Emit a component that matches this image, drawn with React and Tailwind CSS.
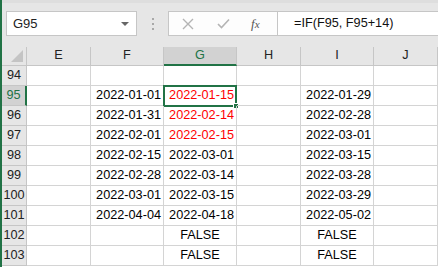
import React from "react";

const GREEN = "#217346";

const columns = [
  { key: "E", w: "w-[64px]" },
  { key: "F", w: "w-[73px]" },
  { key: "G", w: "w-[73px]" },
  { key: "H", w: "w-[64px]" },
  { key: "I", w: "w-[73px]" },
  { key: "J", w: "w-[64px]" },
];

const rows = [
  { n: 94 },
  { n: 95, F: "2022-01-01", G: "2022-01-15", I: "2022-01-29", red: true },
  { n: 96, F: "2022-01-31", G: "2022-02-14", I: "2022-02-28", red: true },
  { n: 97, F: "2022-02-01", G: "2022-02-15", I: "2022-03-01", red: true },
  { n: 98, F: "2022-02-15", G: "2022-03-01", I: "2022-03-15" },
  { n: 99, F: "2022-02-28", G: "2022-03-14", I: "2022-03-28" },
  { n: 100, F: "2022-03-01", G: "2022-03-15", I: "2022-03-29" },
  { n: 101, F: "2022-04-04", G: "2022-04-18", I: "2022-05-02" },
  { n: 102, G: "FALSE", I: "FALSE" },
  { n: 103, G: "FALSE", I: "FALSE" },
];

function FormulaBar() {
  return (
    <div className="h-[47px] bg-[#e6e6e6] border-t-[3px] border-[#dedede] flex items-start pt-[8px]">
      {/* name box */}
      <div className="ml-[4px] w-[131px] h-[25px] bg-white border border-[#c6c6c6] flex items-center pl-[6px] pr-[7px]">
        <span className="text-[13px] text-[#222]">G95</span>
        <span className="ml-auto w-0 h-0 border-l-[4px] border-r-[4px] border-t-[4px] border-l-transparent border-r-transparent border-t-[#666]" />
      </div>
      {/* grip dots */}
      <div className="w-[31px] h-[25px] flex flex-col items-center justify-center gap-[3px]">
        <span className="w-[2px] h-[2px] bg-[#a8a8a8]" />
        <span className="w-[2px] h-[2px] bg-[#a8a8a8]" />
        <span className="w-[2px] h-[2px] bg-[#a8a8a8]" />
      </div>
      {/* cancel / enter / fx */}
      <div className="w-[110px] h-[25px] bg-[#fdfdfd] border border-[#c6c6c6] flex items-center">
        <svg width="12" height="12" viewBox="0 0 12 12" className="ml-[13px]">
          <path d="M1 1 L11 11 M11 1 L1 11" stroke="#b4b4b4" strokeWidth="1.4" fill="none" />
        </svg>
        <svg width="13" height="11" viewBox="0 0 13 11" className="ml-[23px]">
          <path d="M1 6 L4.5 9.5 L12 1.5" stroke="#b4b4b4" strokeWidth="1.6" fill="none" />
        </svg>
        <span className="ml-[21px] text-[13px] italic text-[#555] font-['Liberation_Serif',serif]">
          f<span className="text-[11px]">x</span>
        </span>
      </div>
      {/* formula input */}
      <div className="flex-1 h-[25px] bg-white border border-l-0 border-r-0 border-[#c6c6c6] flex items-center pl-[16px]">
        <span className="text-[12.7px] text-[#111]">=IF(F95, F95+14)</span>
      </div>
    </div>
  );
}

function HeaderRow() {
  return (
    <div className="flex h-[19px]">
      <div className="w-[25px] h-full border-r border-b border-[#c6c6c6] bg-[#e6e6e6] flex items-end justify-end pr-[3px] pb-[3px]">
        <svg width="12" height="12" viewBox="0 0 12 12">
          <path d="M12 0 L12 12 L0 12 Z" fill="#c4c4c4" />
        </svg>
      </div>
      {columns.map((c) =>
        c.key === "G" ? (
          <div
            key={c.key}
            className={`${c.w} h-full bg-[#d2d2d2] border-r border-[#c6c6c6] border-b-2 border-b-[#217346] flex items-center justify-center text-[12.7px] text-[#217346]`}
          >
            {c.key}
          </div>
        ) : (
          <div
            key={c.key}
            className={`${c.w} h-full bg-[#e6e6e6] border-r border-b border-[#c6c6c6] flex items-center justify-center text-[12.7px] text-[#222]`}
          >
            {c.key}
          </div>
        )
      )}
    </div>
  );
}

function Cell({ col, row }) {
  const value = row[col.key];
  const isBool = value === "FALSE";
  const selected = row.n === 95 && col.key === "G";
  const red = row.red && col.key === "G";
  return (
    <div
      className={`${col.w} h-full border-r border-b border-[#d4d4d4] flex items-center pt-px relative ${
        isBool ? "justify-center" : "justify-end pr-[2px]"
      } ${red ? "text-[#ff0000]" : "text-black"}`}
    >
      {value}
      {selected && (
        <div className="absolute -left-px -top-px w-[74px] h-[22px] border-2 border-[#217346]">
          <span className="absolute -right-[4px] -bottom-[4px] w-[6px] h-[6px] bg-[#217346] border border-white" />
        </div>
      )}
    </div>
  );
}

export default function App() {
  return (
    <div
      className="w-[438px] h-[267px] overflow-hidden bg-white border-l-2 font-['Liberation_Sans',Arial,sans-serif]"
      style={{ borderLeftColor: GREEN }}
    >
      <FormulaBar />
      <HeaderRow />
      {rows.map((row) => (
        <div key={row.n} className="flex h-[20px] text-[12.7px]">
          {row.n === 95 ? (
            <div className="w-[25px] h-full bg-[#d2d2d2] border-r-2 border-r-[#217346] border-b border-b-[#c6c6c6] flex items-center justify-center text-[#217346] pt-px">
              {row.n}
            </div>
          ) : (
            <div className="w-[25px] h-full bg-[#e6e6e6] border-r border-b border-[#c6c6c6] flex items-center justify-center text-[#222] pt-px">
              {row.n}
            </div>
          )}
          {columns.map((c) => (
            <Cell key={c.key} col={c} row={row} />
          ))}
        </div>
      ))}
    </div>
  );
}
